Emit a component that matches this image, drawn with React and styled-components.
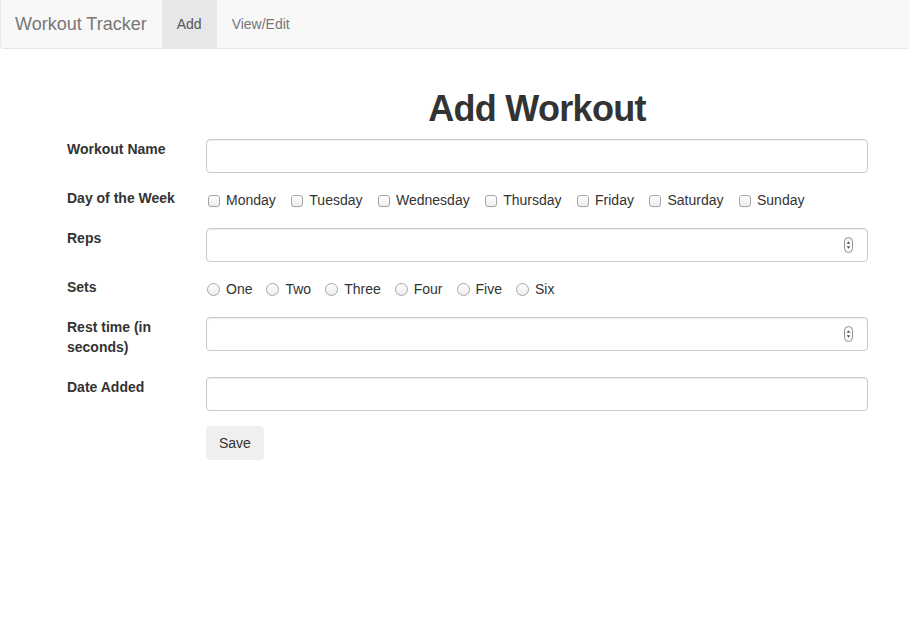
import styled, { createGlobalStyle } from "styled-components"

const Global = createGlobalStyle`
    body {
        margin: 0;
        background: #fff;
        color: #333;
        font: 400 14px/20px "Liberation Sans", Arial, sans-serif;
    }
    * { box-sizing: border-box; }
`

const days = ['Monday', 'Tuesday', 'Wednesday', 'Thursday', 'Friday', 'Saturday', 'Sunday']
const sets = ['One', 'Two', 'Three', 'Four', 'Five', 'Six']

export default function App () {
    return (
        <>
            <Global />
            <Navbar>
                <Brand>Workout Tracker</Brand>
                <NavLink active>Add</NavLink>
                <NavLink>View/Edit</NavLink>
            </Navbar>
            <Page>
                <Title>Add Workout</Title>
                <Group>
                    <Label>Workout Name</Label>
                    <Field><Input type="text" /></Field>
                </Group>
                <Group>
                    <Label>Day of the Week</Label>
                    <Options gap={13.5}>
                        {days.map(d => (
                            <Option key={d}><Check type="checkbox" />{d}</Option>
                        ))}
                    </Options>
                </Group>
                <Group>
                    <Label>Reps</Label>
                    <Field><Input type="text" /><Spinner /></Field>
                </Group>
                <Group>
                    <Label>Sets</Label>
                    <Options gap={13}>
                        {sets.map(s => (
                            <Option key={s}><Radio type="radio" name="sets" />{s}</Option>
                        ))}
                    </Options>
                </Group>
                <Group>
                    <Label>Rest time (in seconds)</Label>
                    <Field><Input type="text" /><Spinner /></Field>
                </Group>
                <Group>
                    <Label>Date Added</Label>
                    <Field><Input type="text" /></Field>
                </Group>
                <Group>
                    <Label />
                    <Button>Save</Button>
                </Group>
            </Page>
        </>
    )
}

function Spinner () {
    return (
        <SpinBox width="9" height="16" viewBox="0 0 9 16">
            <rect x="0.5" y="0.5" width="8" height="15" rx="4" fill="#fafafa" stroke="#8e8e8e" />
            <path d="M4.5 4.2 L6.3 6.8 L2.7 6.8 Z" fill="#555" />
            <path d="M4.5 11.8 L6.3 9.2 L2.7 9.2 Z" fill="#555" />
        </SpinBox>
    )
}

const Navbar = styled.nav`
    display: flex;
    height: 49px;
    background: #f8f8f8;
    border-left: 1px solid #e7e7e7;
    border-bottom: 1px solid #e7e7e7;
    border-bottom-left-radius: 4px;
`

const Brand = styled.div`
    padding: 14px 15px 14px 14px;
    font-size: 18px;
    line-height: 20px;
    color: #777;
`

const NavLink = styled.div`
    padding: 14px 15px;
    line-height: 20px;
    color: ${p => p.active ? '#555' : '#777'};
    background: ${p => p.active ? '#e7e7e7' : 'transparent'};
`

const Page = styled.main`
    padding: 40px 41px 0 67px;
`

const Title = styled.h1`
    margin: 0 0 10px 139px;
    font-size: 36px;
    line-height: 40px;
    font-weight: 700;
    letter-spacing: -0.7px;
    text-align: center;
    color: #333;
`

const Group = styled.div`
    display: flex;
    align-items: flex-start;
    margin-bottom: 15px;
`

const Label = styled.label`
    flex: 0 0 124px;
    margin: 0 15px 5px 0;
    font-weight: 700;
    line-height: 20px;
`

const Field = styled.div`
    position: relative;
    flex: 1;
`

const Input = styled.input`
    display: block;
    width: 100%;
    height: 34px;
    padding: 6px 12px;
    border: 1px solid #ccc;
    border-radius: 4px;
    box-shadow: inset 0 1px 1px rgba(0, 0, 0, .075);
    font: inherit;
    color: #555;
    background: #fff;
`

const SpinBox = styled.svg`
    position: absolute;
    right: 15px;
    top: 9px;
`

const Options = styled.div`
    display: flex;
    gap: ${p => p.gap}px;
    padding-top: 2px;
`

const Option = styled.label`
    display: flex;
    align-items: center;
    line-height: 20px;
`

const Check = styled.input`
    appearance: none;
    width: 12px;
    height: 12px;
    margin: 1px 6px 0 2px;
    border: 1px solid #a6a6a6;
    border-radius: 3px;
    background: linear-gradient(#fff, #ededed);
    box-shadow: 0 1px 0 rgba(0, 0, 0, .03);
`

const Radio = styled.input`
    appearance: none;
    width: 13px;
    height: 13px;
    margin: 1px 6px 0 1px;
    border: 1px solid #a6a6a6;
    border-radius: 50%;
    background: linear-gradient(#fff, #ededed);
`

const Button = styled.button`
    height: 34px;
    padding: 6px 12px;
    border: 1px solid #efefef;
    border-radius: 4px;
    background: #efefef;
    color: #333;
    font: inherit;
`
